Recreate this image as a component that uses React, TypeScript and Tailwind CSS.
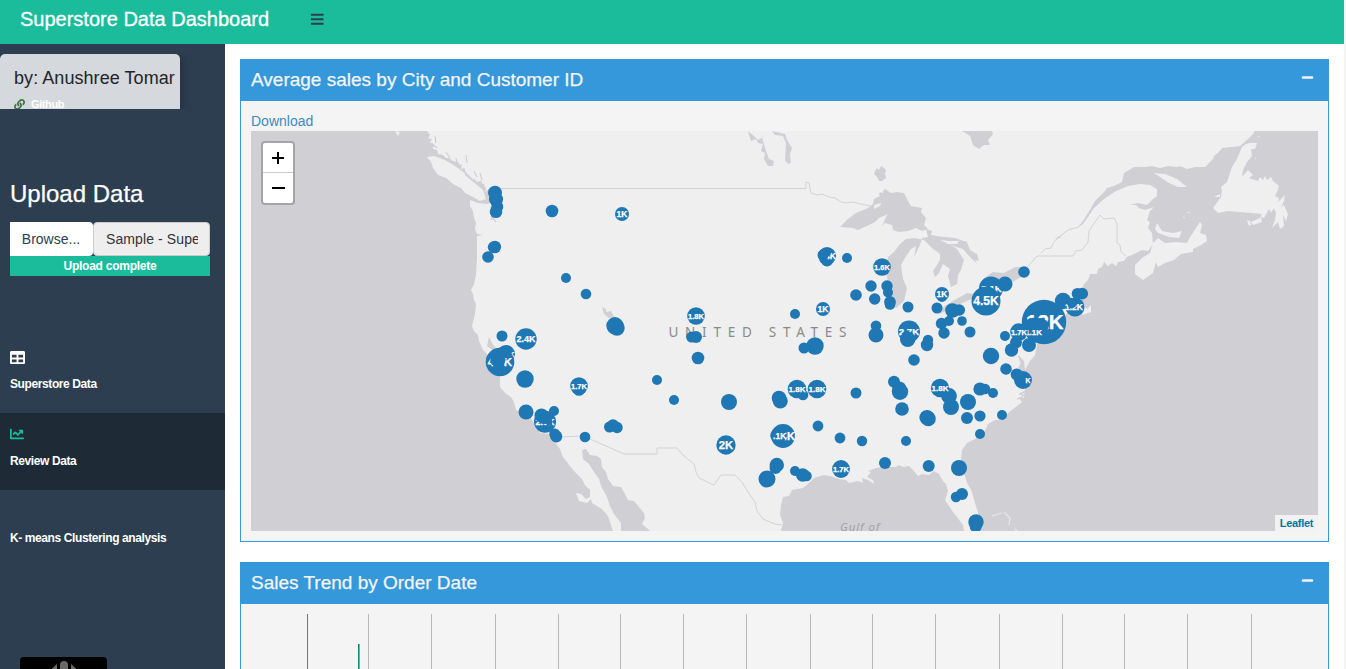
import React from "react";
import { FaBars, FaChartLine, FaLink, FaMinus, FaTable } from "react-icons/fa";

type Bubble = [x: number, y: number, r: number, label?: string, size?: number, dx?: number, dy?: number];

const bubbles: Bubble[] = [
  [495, 192.7, 7], [496, 199.3, 7], [497.3, 206.7, 6], [496, 211.7, 6.3],
  [552, 211, 6.3], [622, 214, 7, "1K", 8.5],
  [494.8, 247, 6.3], [493.3, 247.3, 5.5], [488, 257, 5.8],
  [566, 278, 5], [586, 294, 5.3], [615, 325.8, 8.7], [617, 328, 7.7],
  [696, 316, 8.8, "1.8K", 7.5], [691.7, 337, 5.6], [696, 337, 6],
  [698, 358, 6.3], [657, 380, 5], [674, 400, 5], [729, 402, 8],
  [726, 445, 9.7, "2K", 11.2], [502, 336, 5.5], [526, 339, 10.7, "2.4K", 9],
  [506, 354, 9, "1.6K", 8], [504.5, 353, 7], [500, 362, 14.3, "4.7K", 11.5], [495.5, 360.5, 5.2], [500, 359.5, 5.6], [498, 366, 4.6],
  [525, 379, 8.7], [579, 389.5, 6.3], [579, 386, 8.8, "1.7K", 7.5],
  [526, 412, 7.5], [545, 421.7, 11, "2.3K", 9], [541.5, 415.5, 7], [554, 411, 5], [544, 418.7, 5.3],
  [549, 422, 3.4], [556.3, 436.5, 6], [554.7, 434, 5.5], [585, 437, 5.3],
  [609.5, 427, 5.5], [613, 425.3, 6], [617, 427.5, 5.7],
  [827, 260.5, 6], [827, 256, 9, "1.4K", 8.5], [823, 255, 5.5], [827, 252.5, 4],
  [847, 258, 5], [882, 267, 8.8, "1.6K", 7.5], [871, 286, 5.7], [887, 286, 5.7], [888, 292.5, 5],
  [874.7, 299, 5.7], [890, 302, 5.9], [890, 304.5, 5.3], [856, 295, 5.8], [908, 307, 5.5],
  [937, 308, 5.5], [942, 297, 5], [942, 294, 7, "1K", 8.5], [823, 309, 7, "1K", 8.5], [795, 314, 5],
  [876, 325.7, 5.3], [876, 335, 7.5], [909, 331.5, 11, "2.7K", 9.7], [907.7, 339.3, 7.7],
  [928, 340, 5.2], [927, 345, 6.2], [914, 360, 5.8], [804, 348, 5.5], [815, 346, 8.7],
  [894, 381.7, 6], [899.3, 388.5, 7], [900, 391.7, 8.2], [902, 409, 6.8], [856, 393, 5.5],
  [779, 398, 7.3], [780.3, 401, 7.5], [803, 395, 5.3], [797, 389, 9.3, "1.8K", 8.1],
  [817, 389, 9.3, "1.8K", 8.1], [818, 426, 5.4],
  [783, 436, 11.9, "2.4K", 11, 0.3, 0], [777.5, 435.5, 7.2], [779.5, 435.5, 7.2, ".1K", 8.5, 0.2, 0],
  [840, 438, 5.4], [862, 441, 5.2], [906, 441, 5],
  [776.8, 465, 7.2], [775.5, 468, 6], [767, 479, 8.5], [795, 471, 5], [802.7, 475, 6.7], [806.5, 476, 5.3],
  [841, 469, 8.9, "1.7K", 7.5], [885, 463, 6], [928.7, 466, 6], [959, 468, 8],
  [962, 494, 6], [956, 497, 5.2], [976, 522, 7.7], [975.7, 526.5, 6],
  [949, 396, 7.9], [940, 388, 9.2, "1.8K", 8], [951, 407, 8], [968, 402, 8],
  [927, 417.5, 7.6], [928.3, 418.7, 7.5], [967, 418, 6], [980, 416, 5.6],
  [980, 389, 6.6], [985, 389, 5.3], [993, 393, 5], [1002, 415, 5], [980, 434, 5],
  [1006, 369, 5.8], [1023, 380, 9, "K", 7, 5, 0], [1016.7, 374.5, 6],
  [1024, 272, 5.8], [991, 288.5, 12, "3.1K", 9.7, 0.5, 0], [1005, 284, 7.5], [991, 294, 4],
  [986, 301, 14.5, "4.5K", 12],
  [952.5, 310.5, 7.3], [959.3, 310, 5.8],
  [941.5, 323.5, 5.7], [949, 321, 5], [944, 333, 5.7], [962, 321, 4.8],
  [970, 332, 5.5], [1005, 336, 5], [991, 356, 8.2],
  [1044, 322, 22.2, "12K", 20.5, 0.8, -0.5], [1063, 301, 8.2], [1075, 307, 9.5, "1.2K", 8.5, -1, 0],
  [1072, 303, 5], [1077.5, 293.7, 5.8], [1082.2, 293.7, 5.9],
  [1033, 327.5, 9.7], [1040, 326.3, 8.4], [1034, 331.5, 8.8, "1.1K", 7.9, -0.5, 1],
  [1019, 332, 8.8, "1.7K", 7.5], [1016, 342.5, 6], [1011.5, 350, 6.7], [1029, 345, 7],
];

const land =
  "M427,131 L430,135 428,138 432,139 430,143 434,144 433,149 437,150 438,154 443,155 446,158 449,158 453,161 458,162 460,165 462,164 461,169 465,168 464,173 469,175 471,181 475,179 476,182 482,181 481,185 486,188 485,192 490,188 491,196 492,202 487,204 478,203 470,200 470,206 473,211 474,218 476,223 475,229 477,234 483,235 477,236 477,257 476,275 474,284 471,290 473,294 474,300 476,304 475,314 472,326 474,331 478,335 479,341 483,350 487,354 491,365 495,373 500,377 500,387 505,393 511,397 514,402 516,410 526,414 530,416 533,422 537,427 540,433 548,434 552,438 557,445 560,449 563,457 570,466 575,472 582,479 585,485 590,490 590,497 586,499 581,494 576,493 579,501 587,503 591,499 592,503 602,509 608,516 610,522 613,531 L621,531 621,523 614,514 610,506 607,497 602,488 599,479 594,472 589,464 583,459 582,450 586,449 590,455 597,456 601,459 602,467 606,472 608,479 613,486 621,487 625,494 628,500 634,501 639,507 644,513 645,518 642,524 648,529 650,531 L781,531 783,523 780,515 781,505 783,497 789,496 792,490 803,488 810,482 814,478 824,475 830,476 839,479 846,480 849,483 858,481 863,483 862,478 868,480 874,484 873,480 867,477 871,472 868,471 876,468 885,467 896,467 899,465 903,467 909,466 914,471 918,476 922,474 929,475 934,471 939,474 943,481 946,484 948,491 945,500 949,506 953,512 957,517 963,525 964,531 L976,531 979,516 975,503 972,492 967,483 964,473 961,460 962,450 967,443 975,439 977,437 984,433 988,424 995,420 1005,419 1008,413 1017,406 1022,402 1019,398 1024,398 1025,388 1020,382 1022,379 1018,368 1021,363 1018,355 1024,361 1025,370 1030,361 1035,355 1037,345 1038,337 1054,339 1064,318 1069,310 1078,311 1083,315 1091,312 1091,305 1087,309 1082,303 1081,292 1084,284 1088,280 1090,274 1097,274 1098,269 1102,267 1104,262 1108,266 1112,263 1116,266 1118,262 1124,261 1127,257 1134,254 1142,250 1148,251 1153,244 1152,233 1148,228 1150,222 1147,220 1150,211 1154,207 1145,210 1139,208 1136,205 1130,205 1138,203 1147,205 1153,199 1157,196 1157,189 1150,185 1140,184 1128,186 1116,191 1104,199 1094,208 1088,217 1083,224 1077,228 L1083,221 1091,208 1095,201 1104,192 1107,188 1114,186 1122,182 1124,173 1129,170 1134,167 1145,167 1152,166 1160,168 1168,166 1177,167 1180,166 1187,169 1195,167 1205,167 1213,159 1214,156 1219,152 1222,148 1232,147 1240,146 1248,139 1254,133 1254,131 Z";

const islands = [
  "M427,157 L434,156 445,160 455,166 466,174 474,182 483,190 486,199 480,201 471,196 465,193 461,188 453,184 446,178 438,175 433,168 431,162 Z",
  "M395,131 L398,136 400,132 Z",
  "M1153,243 L1158,238 1165,243 1176,242 1187,243 1190,237 1194,231 1200,222 1202,225 1200,233 1206,235 1207,241 1201,245 1193,249 1193,252 1181,254 1174,260 1165,263 1158,267 1156,262 1153,273 1143,280 1135,274 1135,265 1142,258 1150,253 Z",
  "M1157,223 L1162,231 1173,233 1182,231 1179,238 1169,237 1158,233 1155,229 Z",
  "M1154,173 L1165,174 1177,179 1187,187 1178,187 1169,183 1160,177 Z",
  "M1213,208 L1221,197 1222,190 1221,187 1227,182 1232,167 1237,159 1242,147 1246,144 1250,143 1257,143 1255,149 1251,149 1252,156 1247,162 1243,170 1242,177 1248,170 1253,175 1249,178 1258,181 1260,177 1263,180 1265,176 1267,180 1271,177 1273,181 1279,186 1277,192 1275,196 1279,198 1278,202 1285,195 1284,201 1281,207 1284,205 1288,214 1286,221 1283,215 1284,226 1280,229 1278,222 1272,228 1275,220 1276,213 1274,208 1271,213 1269,209 1264,218 1261,217 1262,222 1253,225 1251,222 1260,218 1262,214 1252,213 1240,212 1228,211 1218,213 Z",
  "M1247,220 L1249,226 1251,225 1250,221 Z",
  "M1214,197 L1220,194 1220,197 Z",
];

const lakes = [
  "M840,227 L848,219 856,213 868,208 873,204 874,199 880,196 879,193 885,189 891,193 897,192 904,193 908,201 911,206 922,208 921,212 926,218 924,225 928,229 922,231 916,228 908,231 899,232 893,230 892,225 885,223 882,226 886,217 888,214 879,218 875,222 867,226 858,230 853,228 Z",
  "M926,229 L932,231 931,235 944,237 955,238 967,242 970,250 977,254 979,261 975,260 977,264 970,257 963,249 953,246 944,241 957,249 964,260 961,270 958,275 957,284 951,287 948,276 950,269 943,264 939,273 935,277 933,271 940,260 940,254 932,248 924,240 920,239 914,238 906,239 900,244 894,252 888,257 885,269 889,285 888,300 896,308 904,301 907,288 903,279 901,265 905,258 911,249 916,246 914,257 920,245 922,238 928,237 Z",
  "M942,308 L951,302 960,297 967,293 975,294 974,298 960,304 949,309 940,314 936,307 Z",
  "M978,289 L984,278 993,272 1004,273 1015,267 1024,267 1021,277 1006,286 992,285 Z",
  "M875,171 L877,168 879,170 881,166 884,168 886,170 885,174 886,178 882,181 879,181 877,177 874,174 Z",
  "M748,131 L751,141 756,139 758,143 763,144 761,151 765,153 764,159 768,166 773,166 774,161 769,159 766,151 764,144 762,137 766,135 758,140 754,136 Z",
  "M772,131 L775,135 783,136 786,143 785,160 788,164 791,163 790,154 792,148 787,140 785,134 Z",
  "M962,131 L970,136 973,145 979,149 984,145 990,145 988,140 993,134 992,131 Z",
  "M602,307 L606,309 606,312 611,311 613,315 616,320 609,318 604,314 Z",
  "M463,167 L467,174 475,181 484,184 486,190 480,187 472,181 465,175 Z",
  "M1054,239 L1061,235 1060,238 Z",
  "M489,337 L493,345 502,354 501,358 494,351 487,346 Z",
];

const holes = [
  "M874,205 L881,203 880,206 874,209 Z",
  "M940,240 L948,244 957,244 959,241 949,241 Z",
  "M878,192 L884,188 883,193 Z",
];

const borders = [
  "M495,188.5 H806 V182 L809,183 811,193 817,195 822,194 829,197 835,198 841,202 846,203 853,202 861,204 870,206",
  "M562,437 L579,436 590,439 624,454 H657 V448 H677 L684,456 694,464 696,472 699,478 714,485 721,475 735,475 742,482 750,495 755,502 757,511 763,519 775,524 782,525",
  "M1020,274 L1031,263 1037,256 H1073 L1076,251 1082,250 1088,242 1089,231 1100,215 1104,219 1114,218 1117,224 V243 L1120,245 1121,252 1126,256",
  "M1041,253 L1045,249 1051,248 1054,242 1059,237 1068,230 1079,227",
];

const inlets = [
  "M431,143 L437,148 M435,136 L436,143 M446,152 L450,158 M456,158 L457,163 M466,155 L467,163 M474,171 L477,177 M480,173 L482,180 M495,210 L491,220 M496,222 L491,216",
];

function MapLabel({ x, y, size, children }: { x: number; y: number; size: number; children: string }) {
  return (
    <text x={x} y={y + size * 0.36} fontSize={size} textAnchor="middle" stroke="#fff" strokeWidth={0.25} className="fill-white font-bold [font-family:'Liberation_Sans',Arial,sans-serif]">
      {children}
    </text>
  );
}

function SalesMap() {
  return (
    <div className="relative h-[400px] w-full overflow-hidden bg-[#d0cfd4]">
      <svg viewBox="251 131 1067 400" className="block h-[400px] w-full" preserveAspectRatio="none">
        <path d={land} fill="#efefef" />
        {islands.map((d) => <path key={d} d={d} fill="#efefef" />)}
        {lakes.map((d) => <path key={d} d={d} fill="#d0cfd4" />)}
        {holes.map((d) => <path key={d} d={d} fill="#efefef" />)}
        {borders.map((d) => <path key={d} d={d} fill="none" stroke="#d3d3d3" strokeWidth={1} />)}
        {inlets.map((d) => <path key={d} d={d} fill="none" stroke="#d0cfd4" strokeWidth={1.2} />)}
        <path d="M1019,356 L1022,366 1021,376 M1026,391 L1020,394 1025,396 M1017,399 L1023,397" fill="none" stroke="#d0cfd4" strokeWidth={1.5} />
        <path d="M992,516 L1002,513 M1004,512 L1010,518 1009,525 M1015,529 L1017,531 M1183,217 l2,1 M1187,212 l3,1 M1255,158 l1,1 M1258,136 l2,1" fill="none" stroke="#e6e6e8" strokeWidth={1.3} />
        <text x="668.5" y="337" fontSize="13.5" textLength="178" fill="#8a8a8a" className="[font-family:'Noto_Sans','Open_Sans',sans-serif]">UNITED STATES</text>
        <text x="840" y="530.5" fontSize="11.5" textLength="39.5" fill="#a3a3a8" className="italic [font-family:'Noto_Sans','Open_Sans',sans-serif]">Gulf of</text>
        {bubbles.map(([x, y, r, label, size = 8, dx = 0, dy = 0]) => (
          <g key={`${x}-${y}`}>
            <circle cx={x} cy={y} r={r} fill="#1f77b4" />
            {label && <MapLabel x={x + dx} y={y + dy} size={size}>{label}</MapLabel>}
          </g>
        ))}
      </svg>
      <div className="absolute left-[10px] top-[10px] flex h-16 w-[34px] flex-col rounded-[4px] border-2 border-[#a5a4a8] bg-white">
        <button className="flex h-[30px] items-center justify-center border-b border-[#ccc]" aria-label="Zoom in">
          <svg width="14" height="14" viewBox="0 0 14 14"><path d="M1 7h12M7 1v12" stroke="#000" strokeWidth="2" /></svg>
        </button>
        <button className="flex h-[30px] items-center justify-center" aria-label="Zoom out">
          <svg width="14" height="14" viewBox="0 0 14 14"><path d="M1 7h13" stroke="#000" strokeWidth="2" /></svg>
        </button>
      </div>
      <div className="absolute bottom-0 right-0 flex h-4 w-[43px] items-center justify-center bg-[#f2f2f3] text-[11px] font-bold tracking-[-0.3px] text-[#0078a8]">Leaflet</div>
    </div>
  );
}

function Card({ title, className, children }: { title: string; className: string; children: React.ReactNode }) {
  return (
    <section className={`flex flex-col border border-[#3498db] bg-[#f4f4f4] ${className}`}>
      <header className="flex h-[41px] shrink-0 items-start justify-between bg-[#3498db] pl-[10px] pr-[14px] text-[#f4f4f4]">
        <h3 className="pt-[6px] text-[19px] leading-7 [-webkit-text-stroke:0.25px]">{title}</h3>
        <FaMinus className="mt-[11px] size-[13px]" />
      </header>
      <div className="flex min-h-0 flex-1 flex-col px-[10px] pt-[10px]">{children}</div>
    </section>
  );
}

const gridLines = [307, 368, 431, 495, 558, 620, 683, 746, 810, 872, 935, 999, 1062, 1124, 1187, 1251];

function TrendChart() {
  return (
    <svg className="block h-[55px] w-full" viewBox="251 614 1067 55" shapeRendering="crispEdges" preserveAspectRatio="none">
      {gridLines.map((x, i) => <rect key={x} x={x} y="614" width="1" height="55" fill={i === 0 ? "#777" : "#b8b8b8"} />)}
      <rect x="358" y="644" width="1" height="25" fill="#0b8a7c" />
      <rect x="359" y="644" width="1" height="25" fill="#66b5aa" />
    </svg>
  );
}

function Sidebar() {
  return (
    <aside className="flex w-[225px] shrink-0 flex-col overflow-hidden bg-[#2c3e50] text-white">
      <div className="mt-[10px] h-[55px] shrink-0 overflow-hidden">
        <div className="h-[70px] w-[180px] rounded-t-[5px] bg-[#d5d8dc] pl-[14px] pt-[12px] shadow-[0_0_12px_rgba(0,0,0,0.3)]">
          <div className="whitespace-nowrap text-[18px] leading-6 tracking-[0.06px] text-[#212529]">by: Anushree Tomar</div>
          <div className="mt-[6px] flex items-center gap-[6px] text-[11px] font-bold leading-4 tracking-[-0.4px]">
            <FaLink className="size-[11px] text-[#3c763d]" />
            <span>Github</span>
          </div>
        </div>
      </div>
      <h2 className="mt-[68px] shrink-0 px-[10px] text-2xl leading-[34px] [-webkit-text-stroke:0.25px]">Upload Data</h2>
      <div className="mx-[10px] mt-[11px] flex h-[34px] shrink-0 text-[14px]">
        <button className="w-[83px] shrink-0 rounded-r-[4px] bg-white pr-[1px] text-[#2c3e50]">Browse...</button>
        <div className="flex w-[117px] shrink-0 items-center rounded-[4px] border border-[#ccc] bg-[#eee] pl-3 text-[#333]">
          <span className="w-[92px] overflow-hidden whitespace-nowrap tracking-[0.1px]">Sample - Superstore.xls</span>
        </div>
      </div>
      <div className="ml-[10px] h-5 w-[200px] shrink-0 bg-[#1abc9c] text-center text-[12px] font-bold leading-5 tracking-[-0.25px]">Upload complete</div>
      <nav className="mt-[60px] shrink-0 text-[12px] font-bold tracking-[-0.4px]">
        <a className="flex h-[77px] flex-col px-[10px] pt-[14px]">
          <FaTable className="size-[15px]" />
          <span className="mt-[11px] leading-4">Superstore Data</span>
        </a>
        <a className="flex h-[77px] flex-col bg-[#1e2b37] px-[10px] pt-[14px]">
          <FaChartLine className="size-[14px] text-[#1abc9c]" />
          <span className="mt-[12px] leading-4">Review Data</span>
        </a>
        <a className="flex h-[77px] flex-col px-[10px] pt-[40px]">
          <span className="leading-4">K- means Clustering analysis</span>
        </a>
      </nav>
      <div className="ml-5 mt-[90px] flex h-[30px] w-[87px] shrink-0 justify-center rounded-[4px] bg-black">
        <svg width="36" height="20" viewBox="0 0 36 20" className="mt-[3px]">
          <path d="M14 20V5a4 4 0 0 1 8 0v15zM11 4v15H-5zM25 4v15H41z" fill="#6a6a6a" />
        </svg>
      </div>
    </aside>
  );
}

export default function App() {
  return (
    <div className="flex h-[669px] w-[1346px] overflow-hidden bg-[#f4f4f4] [font-family:'Liberation_Sans',Arial,sans-serif]">
      <div className="flex w-[1344px] flex-col bg-white">
        <header className="flex h-11 shrink-0 items-start bg-[#1abc9c] pl-[20px]">
          <h1 className="w-[289.5px] whitespace-nowrap pt-[5px] text-[20px] leading-7 text-white [-webkit-text-stroke:0.3px]">Superstore Data Dashboard</h1>
          <FaBars className="mt-[11.5px] size-[14.5px] text-[#2c3e50]" />
        </header>
        <div className="flex min-h-0 flex-1">
          <Sidebar />
          <main className="flex flex-1 flex-col gap-5 pl-[15px] pr-[15px] pt-[15px]">
            <Card title="Average sales by City and Customer ID" className="h-[483px] shrink-0">
              <a className="h-5 text-[14px] leading-5 text-[#3c8dbc]">Download</a>
              <SalesMap />
            </Card>
            <Card title="Sales Trend by Order Date" className="h-[140px] shrink-0">
              <TrendChart />
            </Card>
          </main>
        </div>
      </div>
    </div>
  );
}
